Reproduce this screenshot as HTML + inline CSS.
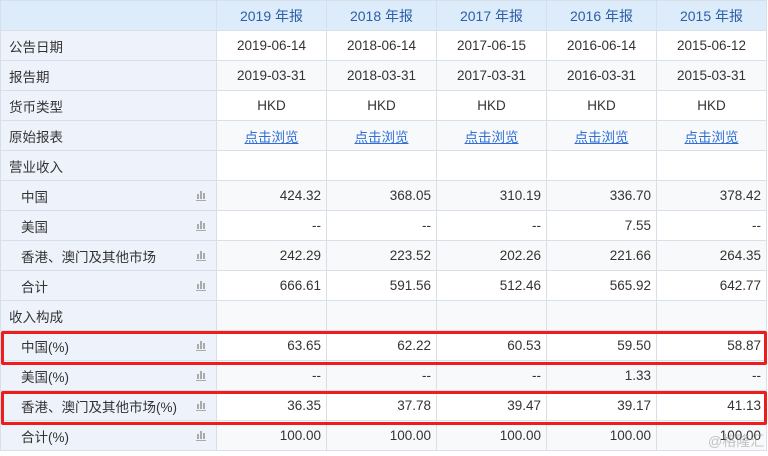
<!DOCTYPE html>
<html><head><meta charset="utf-8"><style>
body{margin:0;background:#fff;font-family:"Liberation Sans","Noto Sans CJK SC",sans-serif;font-size:13.5px;color:#333;position:relative;width:768px;height:456px;overflow:hidden}
table{border-collapse:collapse;table-layout:fixed;position:absolute;left:0;top:0}
td,th{border:1px solid #d9dfe8;height:29px;padding:0;white-space:nowrap}
th{background:#ddecfb;color:#2d5ea6;font-weight:normal;font-size:14px;text-align:center}
td.l{background:#eef3fb;padding-left:8px;position:relative}
td.s{padding-left:20px}
tr:nth-child(even) td{background:#fff}
tr:nth-child(odd) td{background:#f8f9fb}
tr td.l{background:#eef3fb!important}
td.c{text-align:center}
td.r{text-align:right;padding-right:5px}
a{color:#2f6fd6;text-decoration:underline}
.ic{position:absolute;left:194px;top:9px;width:12px;height:11px}
.box{position:absolute;border:3px solid #f01c1c;border-radius:2px;left:1px;width:760px;height:28px}
.wm{position:absolute;left:708px;top:431px;color:rgba(150,150,150,.55);font-size:14px}
</style></head><body>
<table>
<colgroup><col style="width:216px"><col style="width:110px"><col style="width:110px"><col style="width:110px"><col style="width:110px"><col style="width:110px"></colgroup>
<tr><th></th><th>2019 年报</th><th>2018 年报</th><th>2017 年报</th><th>2016 年报</th><th>2015 年报</th></tr>
<tr><td class="l">公告日期</td><td class="c">2019-06-14</td><td class="c">2018-06-14</td><td class="c">2017-06-15</td><td class="c">2016-06-14</td><td class="c">2015-06-12</td></tr>
<tr><td class="l">报告期</td><td class="c">2019-03-31</td><td class="c">2018-03-31</td><td class="c">2017-03-31</td><td class="c">2016-03-31</td><td class="c">2015-03-31</td></tr>
<tr><td class="l">货币类型</td><td class="c">HKD</td><td class="c">HKD</td><td class="c">HKD</td><td class="c">HKD</td><td class="c">HKD</td></tr>
<tr><td class="l">原始报表</td><td class="c"><a>点击浏览</a></td><td class="c"><a>点击浏览</a></td><td class="c"><a>点击浏览</a></td><td class="c"><a>点击浏览</a></td><td class="c"><a>点击浏览</a></td></tr>
<tr><td class="l">营业收入</td><td></td><td></td><td></td><td></td><td></td></tr>
<tr><td class="l s">中国<svg class="ic" viewBox="0 0 12 11"><g fill="#aaa"><rect x="2" y="4" width="2" height="5"/><rect x="5" y="1" width="2" height="8"/><rect x="8" y="3" width="2" height="6"/><rect x="1" y="10" width="10" height="1"/></g></svg></td><td class="r">424.32</td><td class="r">368.05</td><td class="r">310.19</td><td class="r">336.70</td><td class="r">378.42</td></tr>
<tr><td class="l s">美国<svg class="ic" viewBox="0 0 12 11"><g fill="#aaa"><rect x="2" y="4" width="2" height="5"/><rect x="5" y="1" width="2" height="8"/><rect x="8" y="3" width="2" height="6"/><rect x="1" y="10" width="10" height="1"/></g></svg></td><td class="r">--</td><td class="r">--</td><td class="r">--</td><td class="r">7.55</td><td class="r">--</td></tr>
<tr><td class="l s">香港、澳门及其他市场<svg class="ic" viewBox="0 0 12 11"><g fill="#aaa"><rect x="2" y="4" width="2" height="5"/><rect x="5" y="1" width="2" height="8"/><rect x="8" y="3" width="2" height="6"/><rect x="1" y="10" width="10" height="1"/></g></svg></td><td class="r">242.29</td><td class="r">223.52</td><td class="r">202.26</td><td class="r">221.66</td><td class="r">264.35</td></tr>
<tr><td class="l s">合计<svg class="ic" viewBox="0 0 12 11"><g fill="#aaa"><rect x="2" y="4" width="2" height="5"/><rect x="5" y="1" width="2" height="8"/><rect x="8" y="3" width="2" height="6"/><rect x="1" y="10" width="10" height="1"/></g></svg></td><td class="r">666.61</td><td class="r">591.56</td><td class="r">512.46</td><td class="r">565.92</td><td class="r">642.77</td></tr>
<tr><td class="l">收入构成</td><td></td><td></td><td></td><td></td><td></td></tr>
<tr><td class="l s">中国(%)<svg class="ic" viewBox="0 0 12 11"><g fill="#aaa"><rect x="2" y="4" width="2" height="5"/><rect x="5" y="1" width="2" height="8"/><rect x="8" y="3" width="2" height="6"/><rect x="1" y="10" width="10" height="1"/></g></svg></td><td class="r">63.65</td><td class="r">62.22</td><td class="r">60.53</td><td class="r">59.50</td><td class="r">58.87</td></tr>
<tr><td class="l s">美国(%)<svg class="ic" viewBox="0 0 12 11"><g fill="#aaa"><rect x="2" y="4" width="2" height="5"/><rect x="5" y="1" width="2" height="8"/><rect x="8" y="3" width="2" height="6"/><rect x="1" y="10" width="10" height="1"/></g></svg></td><td class="r">--</td><td class="r">--</td><td class="r">--</td><td class="r">1.33</td><td class="r">--</td></tr>
<tr><td class="l s">香港、澳门及其他市场(%)<svg class="ic" viewBox="0 0 12 11"><g fill="#aaa"><rect x="2" y="4" width="2" height="5"/><rect x="5" y="1" width="2" height="8"/><rect x="8" y="3" width="2" height="6"/><rect x="1" y="10" width="10" height="1"/></g></svg></td><td class="r">36.35</td><td class="r">37.78</td><td class="r">39.47</td><td class="r">39.17</td><td class="r">41.13</td></tr>
<tr><td class="l s">合计(%)<svg class="ic" viewBox="0 0 12 11"><g fill="#aaa"><rect x="2" y="4" width="2" height="5"/><rect x="5" y="1" width="2" height="8"/><rect x="8" y="3" width="2" height="6"/><rect x="1" y="10" width="10" height="1"/></g></svg></td><td class="r">100.00</td><td class="r">100.00</td><td class="r">100.00</td><td class="r">100.00</td><td class="r">100.00</td></tr>
</table>
<div class="box" style="top:331px"></div>
<div class="box" style="top:391px"></div>
<div class="wm">@格隆汇</div>
</body></html>
